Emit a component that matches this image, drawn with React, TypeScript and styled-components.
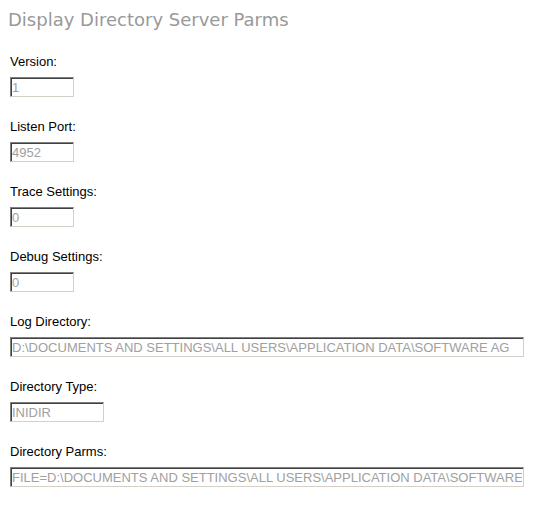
import React from 'react';
import styled, { createGlobalStyle } from 'styled-components';

const GlobalStyle = createGlobalStyle`
  html, body {
    margin: 0;
    padding: 0;
    background: #ffffff;
  }
`;

const Page = styled.div`
  padding: 10px 0 0 8px;
  font-family: 'Liberation Sans', Arial, sans-serif;
`;

const Title = styled.h2`
  margin: 0 0 24px 0;
  font-family: 'DejaVu Sans', Verdana, sans-serif;
  font-size: 18px;
  font-weight: normal;
  color: #999999;
  line-height: 20px;
`;

const Field = styled.div`
  display: flex;
  flex-direction: column;
  align-items: flex-start;
  gap: 8px;
  padding-left: 2px;
  margin-bottom: 22px;
`;

const Label = styled.label`
  font-size: 13px;
  line-height: 15px;
  color: #000000;
`;

const ValueBox = styled.input<{ $width: number }>`
  box-sizing: border-box;
  width: ${p => p.$width}px;
  height: 20px;
  margin: 0;
  padding: 1px 1px 0 1px;
  font-family: 'Liberation Sans', Arial, sans-serif;
  font-size: 13px;
  color: #a0a0a0;
  background: #ffffff;
  border: 1px solid;
  border-color: #808080 #d4d0c8 #d4d0c8 #808080;
  box-shadow: inset 1px 1px 0 #404040;
  outline: none;
  overflow: hidden;
  -webkit-text-fill-color: #a0a0a0;
  opacity: 1;
`;

const fields = [
  { label: 'Version:', value: '1', width: 64 },
  { label: 'Listen Port:', value: '4952', width: 64 },
  { label: 'Trace Settings:', value: '0', width: 64 },
  { label: 'Debug Settings:', value: '0', width: 64 },
  {
    label: 'Log Directory:',
    value: 'D:\\DOCUMENTS AND SETTINGS\\ALL USERS\\APPLICATION DATA\\SOFTWARE AG',
    width: 514,
  },
  { label: 'Directory Type:', value: 'INIDIR', width: 94 },
  {
    label: 'Directory Parms:',
    value: 'FILE=D:\\DOCUMENTS AND SETTINGS\\ALL USERS\\APPLICATION DATA\\SOFTWARE AG\\DIRECTORY',
    width: 514,
  },
];

export default function App() {
  return (
    <>
      <GlobalStyle />
      <Page>
        <Title>Display Directory Server Parms</Title>
        {fields.map(f => (
          <Field key={f.label}>
            <Label>{f.label}</Label>
            <ValueBox $width={f.width} value={f.value} disabled readOnly />
          </Field>
        ))}
      </Page>
    </>
  );
}
